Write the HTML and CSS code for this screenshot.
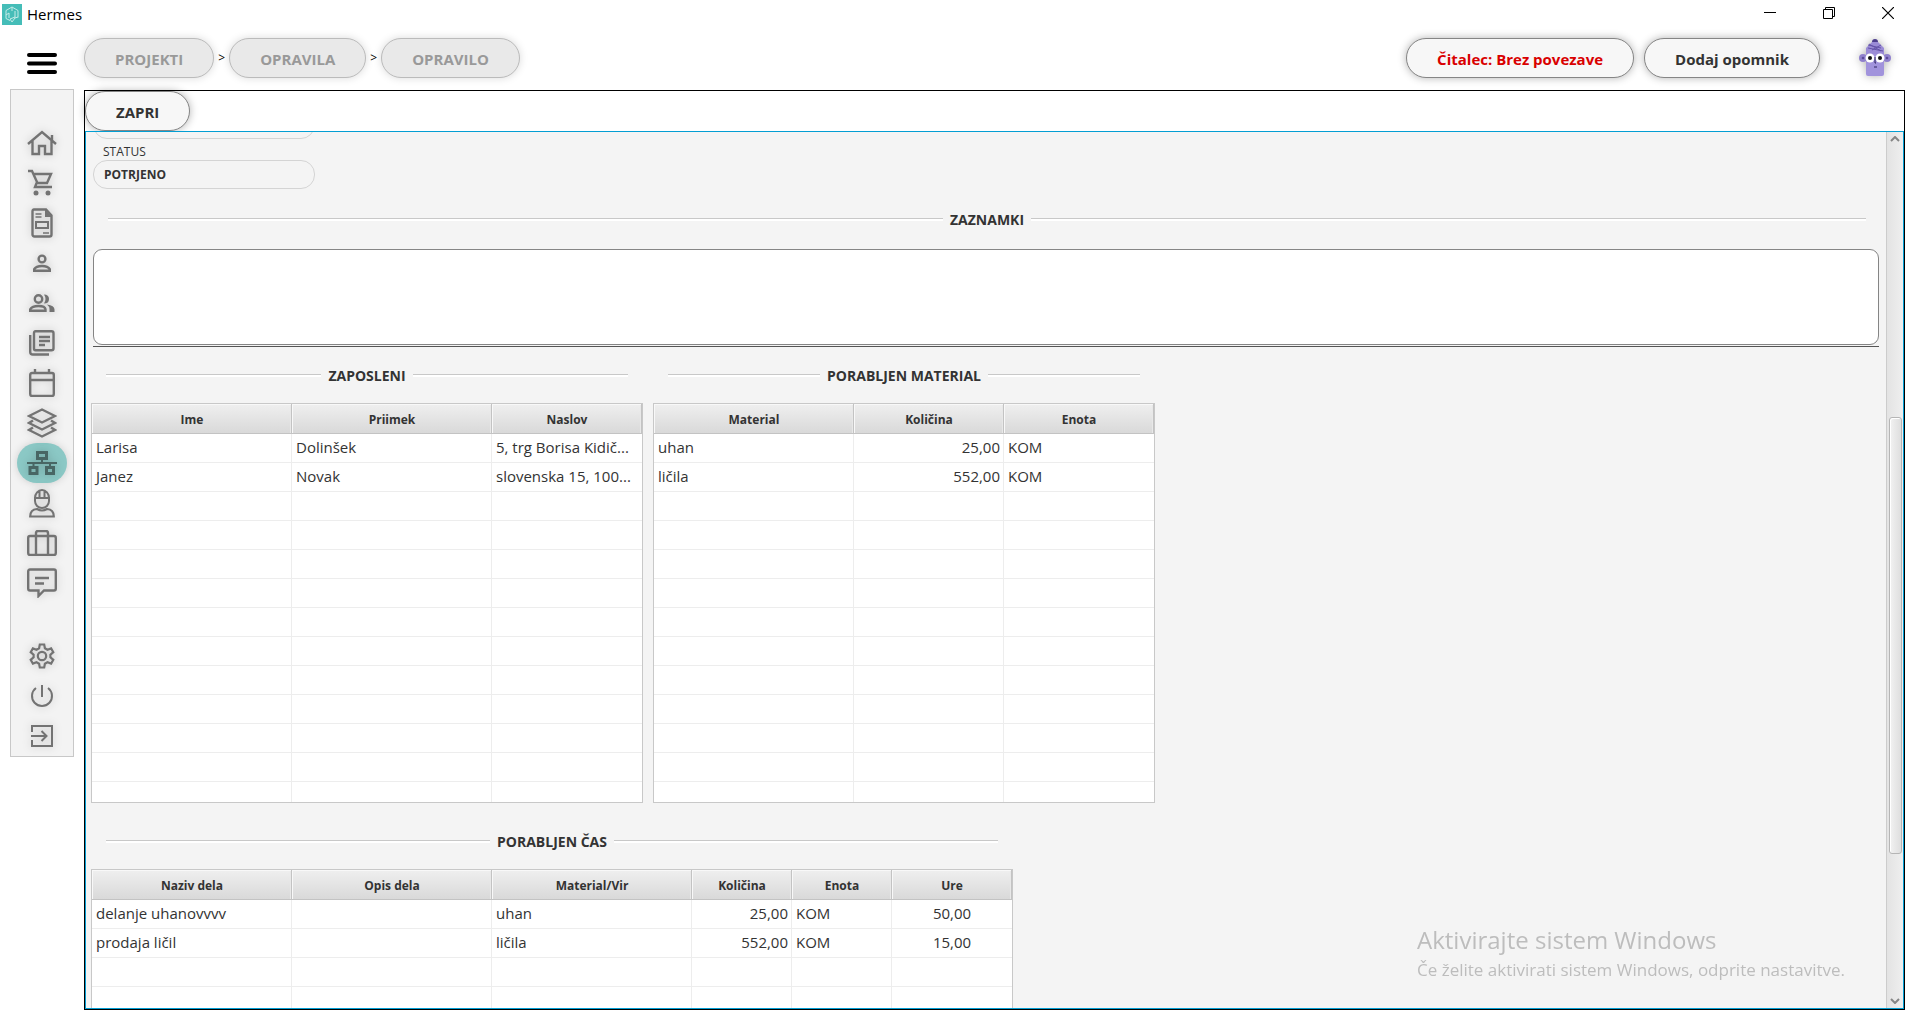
FILE: index.html
```html
<!DOCTYPE html>
<html lang="sl">
<head>
  <meta charset="UTF-8">
  <meta name="viewport" content="width=device-width, initial-scale=1.0">
  <title>Hermes</title>
  <link rel="stylesheet" href="styles.css">
</head>
<body>
  <header class="titlebar">
    <svg class="logo" width="20" height="21" viewBox="0 0 20 21"><rect width="20" height="21" fill="#45bdb8"/><path d="M10 3l6 3.500v7M10 3L4 6.500v8l4 2M10 3v4M4 11l3-2M7 9v5M13 7v7l-3 4-2-3 5-2M16 13l-3 1" fill="none" stroke="#c4ebe7" stroke-width="1"/></svg>
    <span class="app-name">Hermes</span>
    <div class="window-buttons">
      <button type="button" aria-label="Minimiraj"><svg width="12" height="12"><path d="M0 5.500h12" stroke="#000"/></svg></button>
      <button type="button" aria-label="Obnovi"><svg width="12" height="12" fill="none" stroke="#000"><path d="M.5 2.500h9v9h-9zM2.500 2V.5h9v9H10"/></svg></button>
      <button type="button" aria-label="Zapri okno"><svg width="12" height="12"><path d="M0 0l12 12M12 0L0 12" stroke="#000" stroke-width="1.200"/></svg></button>
    </div>
  </header>

  <div class="topbar">
    <button type="button" class="hamburger" aria-label="Meni"><svg width="30" height="22" viewBox="0 0 30 22"><path d="M2 2h26M2 10.500h26M2 19h26" stroke="#000" stroke-width="4" stroke-linecap="round"/></svg></button>
    <nav class="breadcrumb">
      <button type="button" class="pill" disabled>PROJEKTI</button>
      <span>&gt;</span>
      <button type="button" class="pill" disabled>OPRAVILA</button>
      <span>&gt;</span>
      <button type="button" class="pill" disabled>OPRAVILO</button>
    </nav>
    <div class="actions">
      <button type="button" class="pill reader">Čitalec: Brez povezave</button>
      <button type="button" class="pill">Dodaj opomnik</button>
    </div>
    <svg class="avatar" width="32" height="38" viewBox="0 0 32 38">
      <circle cx="4" cy="19" r="4" fill="#8f80cc"/><circle cx="28" cy="19" r="4" fill="#8f80cc"/>
      <circle cx="4" cy="19" r="1.300" fill="#5b4a99"/><circle cx="28" cy="19" r="1.300" fill="#5b4a99"/>
      <path d="M7 13h18v22q0 2-2 2H9q-2 0-2-2z" fill="#a193dc"/>
      <path d="M7 15V9l6-6h6l6 6v6z" fill="#9a8bd6"/>
      <path d="M13 3q0-3 3-3t3 3z" fill="#4c3d8c"/>
      <path d="M9 6l13 3M9 9l15 3M22 6l-9 5M10 5l12 7" stroke="#6453a8" fill="none"/>
      <circle cx="11" cy="19" r="4.500" fill="#fff"/><circle cx="21" cy="19" r="4.500" fill="#fff"/>
      <circle cx="11" cy="19" r="2" fill="#111"/><circle cx="21" cy="19" r="2" fill="#111"/>
      <path d="M16 18v6h1M15 28h3" stroke="#2d2360" fill="none"/>
    </svg>
  </div>

  <div class="workspace">
    <nav class="sidebar">
      <a href="#" aria-label="Domov"><svg width="30" height="26" viewBox="0 0 30 26"><path d="M1 14L15 2l14 12M5.500 11v13H12v-8h6v8h6.500V11M25 10V5" stroke-width="2.400"/></svg></a>
      <a href="#" aria-label="Nabava"><svg width="30" height="28" viewBox="0 0 30 28"><path d="M1 2h4l5 11-2 5h17M6 5h18l-4 9H10" stroke-width="2.400"/><circle cx="9" cy="24" r="2.500" class="solid"/><circle cx="21" cy="24" r="2.500" class="solid"/></svg></a>
      <a href="#" aria-label="Dokumenti"><svg width="22" height="30" viewBox="0 0 22 30"><path d="M3 1.500h12l5.500 6v19q0 2-2 2h-15q-2 0-2-2v-23q0-2 1.500-2z" stroke-width="2.400"/><path d="M14 1v8h7z" class="solid"/><path d="M4.500 6h6M4.500 9h6M12 25h6" stroke-width="1.500"/><path d="M5 14h12v6H5z" stroke-width="2"/></svg></a>
      <a href="#" aria-label="Stranka"><svg width="18" height="18" viewBox="0 0 18 18"><circle cx="9" cy="5" r="3.400" stroke-width="2.400"/><path d="M1.200 16.800v-1.600Q3 12 9 12t7.800 3.200v1.600z" stroke-width="2.400"/></svg></a>
      <a href="#" aria-label="Stranke"><svg width="26" height="20" viewBox="0 0 26 20"><circle cx="9.500" cy="6" r="3.700" stroke-width="2.400"/><path d="M1.200 17.800v-1.500Q3 13 9.500 13t7 3.300v1.500z" stroke-width="2.400"/><path d="M15 1.400q5 0 5 4.600t-5 4.600q3-4.600 0-9.200zM18 11.500q7.500 1 7.500 5V19h-5v-3q0-2.500-2.500-4.500z" class="solid"/></svg></a>
      <a href="#" aria-label="Knjižnica"><svg width="26" height="26" viewBox="0 0 26 26"><path d="M6.500 1.200h16q2 0 2 2v15q0 2-2 2h-16q-1.500 0-1.500-2v-15q0-2 1.500-2zM1.200 5v17q0 2.500 2.500 2.500H20M10 7h11M10 11h11M10 15h6" stroke-width="2.400"/></svg></a>
      <a href="#" aria-label="Koledar"><svg width="26" height="28" viewBox="0 0 26 28"><path d="M3 4h20q1.800 0 1.800 2v19q0 2-1.800 2H3q-1.800 0-1.800-2V6q0-2 1.800-2zM1 11h24M6 0v4M20 0v4" stroke-width="2.400"/></svg></a>
      <a href="#" aria-label="Zaloge"><svg width="30" height="30" viewBox="0 0 30 30"><path d="M15 1.500l13 6.500-13 6.500L2 8zM6 12.500L2 15l13 6.500L28 15l-4-2.500M6 19.500L2 22l13 6.500L28 22l-4-2.500" stroke-width="2.400"/></svg></a>
      <a href="#" class="active" aria-label="Projekti"><svg width="30" height="24" viewBox="0 0 30 24"><path d="M10.500 1.500h9v6h-9zM3 16.500h7v6H3zM19.500 16.500h7v6h-7z" stroke-width="3"/><path d="M15 8v4M0 12h30M6.500 12v4M23 12v4" stroke-width="2"/></svg></a>
      <a href="#" aria-label="Zaposleni"><svg width="26" height="30" viewBox="0 0 26 30"><path d="M6 10a7 8 0 0 1 14 0v3a7 7 0 0 1-14 0zM5 10h16M10.500 3v6M15.500 3v6" stroke-width="2"/><path d="M1.200 28.500q0-7 6.800-7.500 5 3 10 0 6.800.5 6.800 7.500z" stroke-width="2.200"/></svg></a>
      <a href="#" aria-label="Posli"><svg width="30" height="26" viewBox="0 0 30 26"><path d="M3 6h24q1.800 0 1.800 2v15q0 2-1.800 2H3q-1.800 0-1.800-2V8Q1.200 6 3 6zM9 25V3q0-2 2-2h8q2 0 2 2v22" stroke-width="2.400"/></svg></a>
      <a href="#" aria-label="Sporočila"><svg width="30" height="30" viewBox="0 0 30 30"><path d="M3 1.500h24q1.800 0 1.800 2v17q0 2-1.800 2H17L11.500 28v-5.500H3q-1.800 0-1.800-2v-17q0-2 1.800-2zM8 10h14M8 15.500h9" stroke-width="2.400"/></svg></a>
      <a href="#" class="settings" aria-label="Nastavitve"><svg width="26" height="26" viewBox="0 0 26 26"><path d="M10.800 1.500h4.400l.7 3.700 2.600 1.500 3.600-1.300 2.200 3.800-2.900 2.500v2.600l2.900 2.500-2.200 3.800-3.600-1.300-2.600 1.500-.7 3.700h-4.400l-.7-3.700-2.600-1.500-3.600 1.300-2.200-3.800 2.900-2.500v-2.600L1.700 9.200l2.200-3.800 3.600 1.300 2.600-1.500z" stroke-width="2.200"/><circle cx="13" cy="13" r="4.200" stroke-width="2.200"/></svg></a>
      <a href="#" aria-label="Izklop"><svg width="24" height="24" viewBox="0 0 24 24"><path d="M12 1v12M6 4a10 10 0 1 0 12 0" stroke-width="2"/></svg></a>
      <a href="#" aria-label="Odjava"><svg width="22" height="22" viewBox="0 0 22 22"><path d="M1 7V1h20v20H1v-6M0 11h15M10.500 6l5 5-5 5" stroke-width="2"/></svg></a>
    </nav>

    <main class="panel">
      <div class="panel-toolbar">
        <button type="button" class="pill">ZAPRI</button>
      </div>
      <div class="scroll-pane">
        <div class="content">
          <input class="field" type="text" aria-label="Naslov" readonly>
          <label class="field-label" for="status">STATUS</label>
          <input class="field" type="text" id="status" value="POTRJENO" readonly>

          <h2 class="section-title wide">ZAZNAMKI</h2>
          <div class="notes">
            <textarea aria-label="Zaznamki"></textarea>
          </div>

          <div class="tables">
            <section>
              <h2 class="section-title">ZAPOSLENI</h2>
              <div class="table-box">
                <table>
                  <colgroup><col class="w200"><col class="w200"><col class="w150"></colgroup>
                  <thead><tr><th>Ime</th><th>Priimek</th><th>Naslov</th></tr></thead>
                  <tbody>
                    <tr><td>Larisa</td><td>Dolinšek</td><td>5, trg Borisa Kidič...</td></tr>
                    <tr><td>Janez</td><td>Novak</td><td>slovenska 15, 100...</td></tr>
                  </tbody>
                </table>
              </div>
            </section>
            <section>
              <h2 class="section-title">PORABLJEN MATERIAL</h2>
              <div class="table-box">
                <table>
                  <colgroup><col class="w200"><col class="w150"><col class="w150"></colgroup>
                  <thead><tr><th>Material</th><th>Količina</th><th>Enota</th></tr></thead>
                  <tbody>
                    <tr><td>uhan</td><td class="num">25,00</td><td>KOM</td></tr>
                    <tr><td>ličila</td><td class="num">552,00</td><td>KOM</td></tr>
                  </tbody>
                </table>
              </div>
            </section>
          </div>

          <div class="tables">
            <section>
              <h2 class="section-title">PORABLJEN ČAS</h2>
              <div class="table-box">
                <table>
                  <colgroup><col class="w200"><col class="w200"><col class="w200"><col class="w100"><col class="w100"><col class="w120"></colgroup>
                  <thead><tr><th>Naziv dela</th><th>Opis dela</th><th>Material/Vir</th><th>Količina</th><th>Enota</th><th>Ure</th></tr></thead>
                  <tbody>
                    <tr><td>delanje uhanovvvv</td><td></td><td>uhan</td><td class="num">25,00</td><td>KOM</td><td class="mid">50,00</td></tr>
                    <tr><td>prodaja ličil</td><td></td><td>ličila</td><td class="num">552,00</td><td>KOM</td><td class="mid">15,00</td></tr>
                  </tbody>
                </table>
              </div>
            </section>
          </div>
        </div>

        <div class="scrollbar">
          <svg width="10" height="6" viewBox="0 0 10 6"><path d="M1 5l4-4 4 4"/></svg>
          <div class="track"><div class="thumb"></div></div>
          <svg width="10" height="6" viewBox="0 0 10 6"><path d="M1 1l4 4 4-4"/></svg>
        </div>
      </div>
    </main>
  </div>

  <div class="watermark">
    <p class="watermark-title">Aktivirajte sistem Windows</p>
    <p>Če želite aktivirati sistem Windows, odprite nastavitve.</p>
  </div>

  <script>
    // pad every table with empty rows so the grid fills its box
    document.querySelectorAll('.table-box table').forEach(table => {
      const columns = table.querySelectorAll('th').length;
      const body = table.tBodies[0];
      while (body.rows.length < 13) {
        const row = body.insertRow();
        for (let i = 0; i < columns; i++) {
          row.insertCell();
        }
      }
    });
  </script>
</body>
</html>
```
FILE: styles.css
```css
* {
  box-sizing: border-box;
}

body {
  margin: 0;
  height: 100vh;
  display: flex;
  flex-direction: column;
  overflow: hidden;
  background: #fff;
  color: #333;
  font-family: "Open Sans", "Noto Sans", sans-serif;
  font-size: 15px;
}

button {
  font-family: inherit;
  cursor: pointer;
}

/* window title bar */
.titlebar {
  display: flex;
  align-items: center;
  height: 28px;
  padding: 0 3px 0 2px;
}

.app-name {
  margin-left: 5px;
  color: #000;
}

.window-buttons {
  display: flex;
  margin-left: auto;
}

.window-buttons button {
  width: 59px;
  height: 28px;
  padding: 0;
  border: none;
  background: none;
}

/* breadcrumb and actions */
.topbar {
  display: flex;
  align-items: center;
  height: 61px;
  padding: 0 29px 2px 26px;
}

.hamburger {
  width: 32px;
  margin: 16px 26px 0 0;
  padding: 0;
  border: none;
  background: none;
}

.pill {
  height: 40px;
  padding: 2px 30px 0;
  border: 1px solid #858585;
  border-radius: 20px;
  background: #f7f7f7;
  box-shadow: 0 0 8px rgba(0, 0, 0, 0.3);
  color: #333;
  font-size: 15px;
  font-weight: bold;
}

.pill:disabled {
  border-color: #bbb;
  background: #e9e9e9;
  box-shadow: 0 0 8px rgba(0, 0, 0, 0.15);
  color: #999;
}

.pill.reader {
  color: #d90000;
}

.breadcrumb {
  display: flex;
  align-items: center;
  gap: 4px;
  font-size: 12px;
}

.breadcrumb span {
  color: #000;
}

.actions {
  display: flex;
  gap: 10px;
  margin-left: auto;
}

.avatar {
  margin-left: 39px;
  filter: drop-shadow(0 0 5px rgba(0, 0, 0, 0.3));
}

/* sidebar */
.workspace {
  flex: 1;
  display: flex;
  align-items: flex-start;
  gap: 10px;
  min-height: 0;
  padding: 0 15px 20px 10px;
}

.sidebar {
  flex: none;
  width: 64px;
  padding: 33px 0 0;
  border: 1px solid #c8c8c8;
  background: #f3f3f3;
}

.sidebar a {
  display: flex;
  align-items: center;
  justify-content: center;
  width: 50px;
  height: 40px;
  margin: 0 auto;
  border-radius: 20px;
}

.sidebar svg {
  fill: none;
  stroke: #737373;
  filter: drop-shadow(0 0 4px rgba(0, 0, 0, 0.2));
}

.sidebar .solid {
  fill: #737373;
  stroke: none;
}

.sidebar a.active {
  background: #8bc8c5;
  box-shadow: 0 0 8px rgba(0, 0, 0, 0.15);
}

.sidebar a.active svg {
  stroke: #486664;
}

.sidebar a.settings {
  margin-top: 33px;
}

/* main panel */
.panel {
  flex: 1;
  align-self: stretch;
  display: flex;
  flex-direction: column;
  min-width: 0;
  margin-top: 1px;
  border: 1px solid #000;
}

.panel-toolbar {
  flex: none;
  height: 40px;
}

.scroll-pane {
  flex: 1;
  display: flex;
  min-height: 0;
  overflow: hidden;
  border: 1px solid #039ed3;
  background: #f4f4f4;
}

.content {
  flex: 1;
  margin-top: -22px;
  padding: 0 7px 0 5px;
}

.field {
  display: block;
  width: 222px;
  height: 29px;
  margin-left: 2px;
  padding: 0 10px;
  border: 1px solid #d4d4d4;
  border-radius: 14px;
  background: #f4f4f4;
  color: #333;
  font-family: inherit;
  font-size: 12px;
  font-weight: bold;
}

.field-label {
  display: block;
  height: 21px;
  margin-left: 12px;
  font-size: 12px;
  line-height: 25px;
}

.section-title {
  display: flex;
  align-items: center;
  gap: 7px;
  height: 56px;
  margin: 0;
  padding: 0 15px;
  font-size: 14px;
}

.section-title.wide {
  height: 60px;
  padding: 0 13px 0 17px;
}

.section-title::before,
.section-title::after {
  content: "";
  flex: 1;
  height: 2px;
  border-top: 1px solid #c8c8c8;
  background: #fff;
}

.notes {
  margin: 0 0 0 2px;
  border-bottom: 1px solid #555;
}

.notes textarea {
  display: block;
  width: 100%;
  height: 96px;
  margin-bottom: 1px;
  border: 1px solid #858585;
  border-radius: 9px;
  background: #fff;
  font-family: inherit;
  resize: none;
}

.tables {
  display: flex;
  gap: 10px;
  margin-bottom: 10px;
}

/* tables */
.table-box {
  height: 400px;
  overflow: hidden;
  border: 1px solid #c8c8c8;
  background: #fff;
}

table {
  table-layout: fixed;
  width: min-content;
  border-collapse: separate;
  border-spacing: 0;
}

.w100 { width: 100px; }
.w120 { width: 120px; }
.w150 { width: 150px; }
.w200 { width: 200px; }

th {
  height: 30px;
  padding: 2px 0 0 1px;
  border-right: 1px solid #c3c3c3;
  border-bottom: 1px solid #c3c3c3;
  background: linear-gradient(#efefef, #d9d9d9);
  box-shadow: inset 1px 1px 0 #f8f8f8, inset -1px 0 0 #e8e8e8;
  font-size: 12px;
}

td {
  height: 29px;
  padding: 0 4px 2px;
  border-right: 1px solid #ededed;
  border-bottom: 1px solid #ededed;
  line-height: 20px;
  white-space: nowrap;
}

td:last-child {
  border-right: none;
}

.num {
  padding-right: 3px;
  text-align: right;
}

.mid {
  text-align: center;
}

/* scrollbar */
.scrollbar {
  flex: none;
  display: flex;
  flex-direction: column;
  align-items: center;
  width: 17px;
  padding: 4px 0;
  border-left: 1px solid #ccc;
  background: linear-gradient(to right, #e3e3e3, #efefef);
}

.scrollbar svg {
  fill: none;
  stroke: #858585;
  stroke-width: 2;
}

.track {
  flex: 1;
  width: 13px;
}

.thumb {
  height: 51%;
  margin-top: 275px;
  border: 1px solid #b5b5b5;
  border-radius: 3px;
  background: linear-gradient(to right, #f2f2f2, #dedede);
  box-shadow: inset 1px 1px 0 #fff;
}

/* system overlay */
.watermark {
  position: fixed;
  right: 75px;
  bottom: 48px;
  color: #bdbdbd;
  font-size: 17px;
  line-height: 24px;
}

.watermark p {
  margin: 0;
}

.watermark .watermark-title {
  font-size: 24px;
  line-height: 36px;
}
```
